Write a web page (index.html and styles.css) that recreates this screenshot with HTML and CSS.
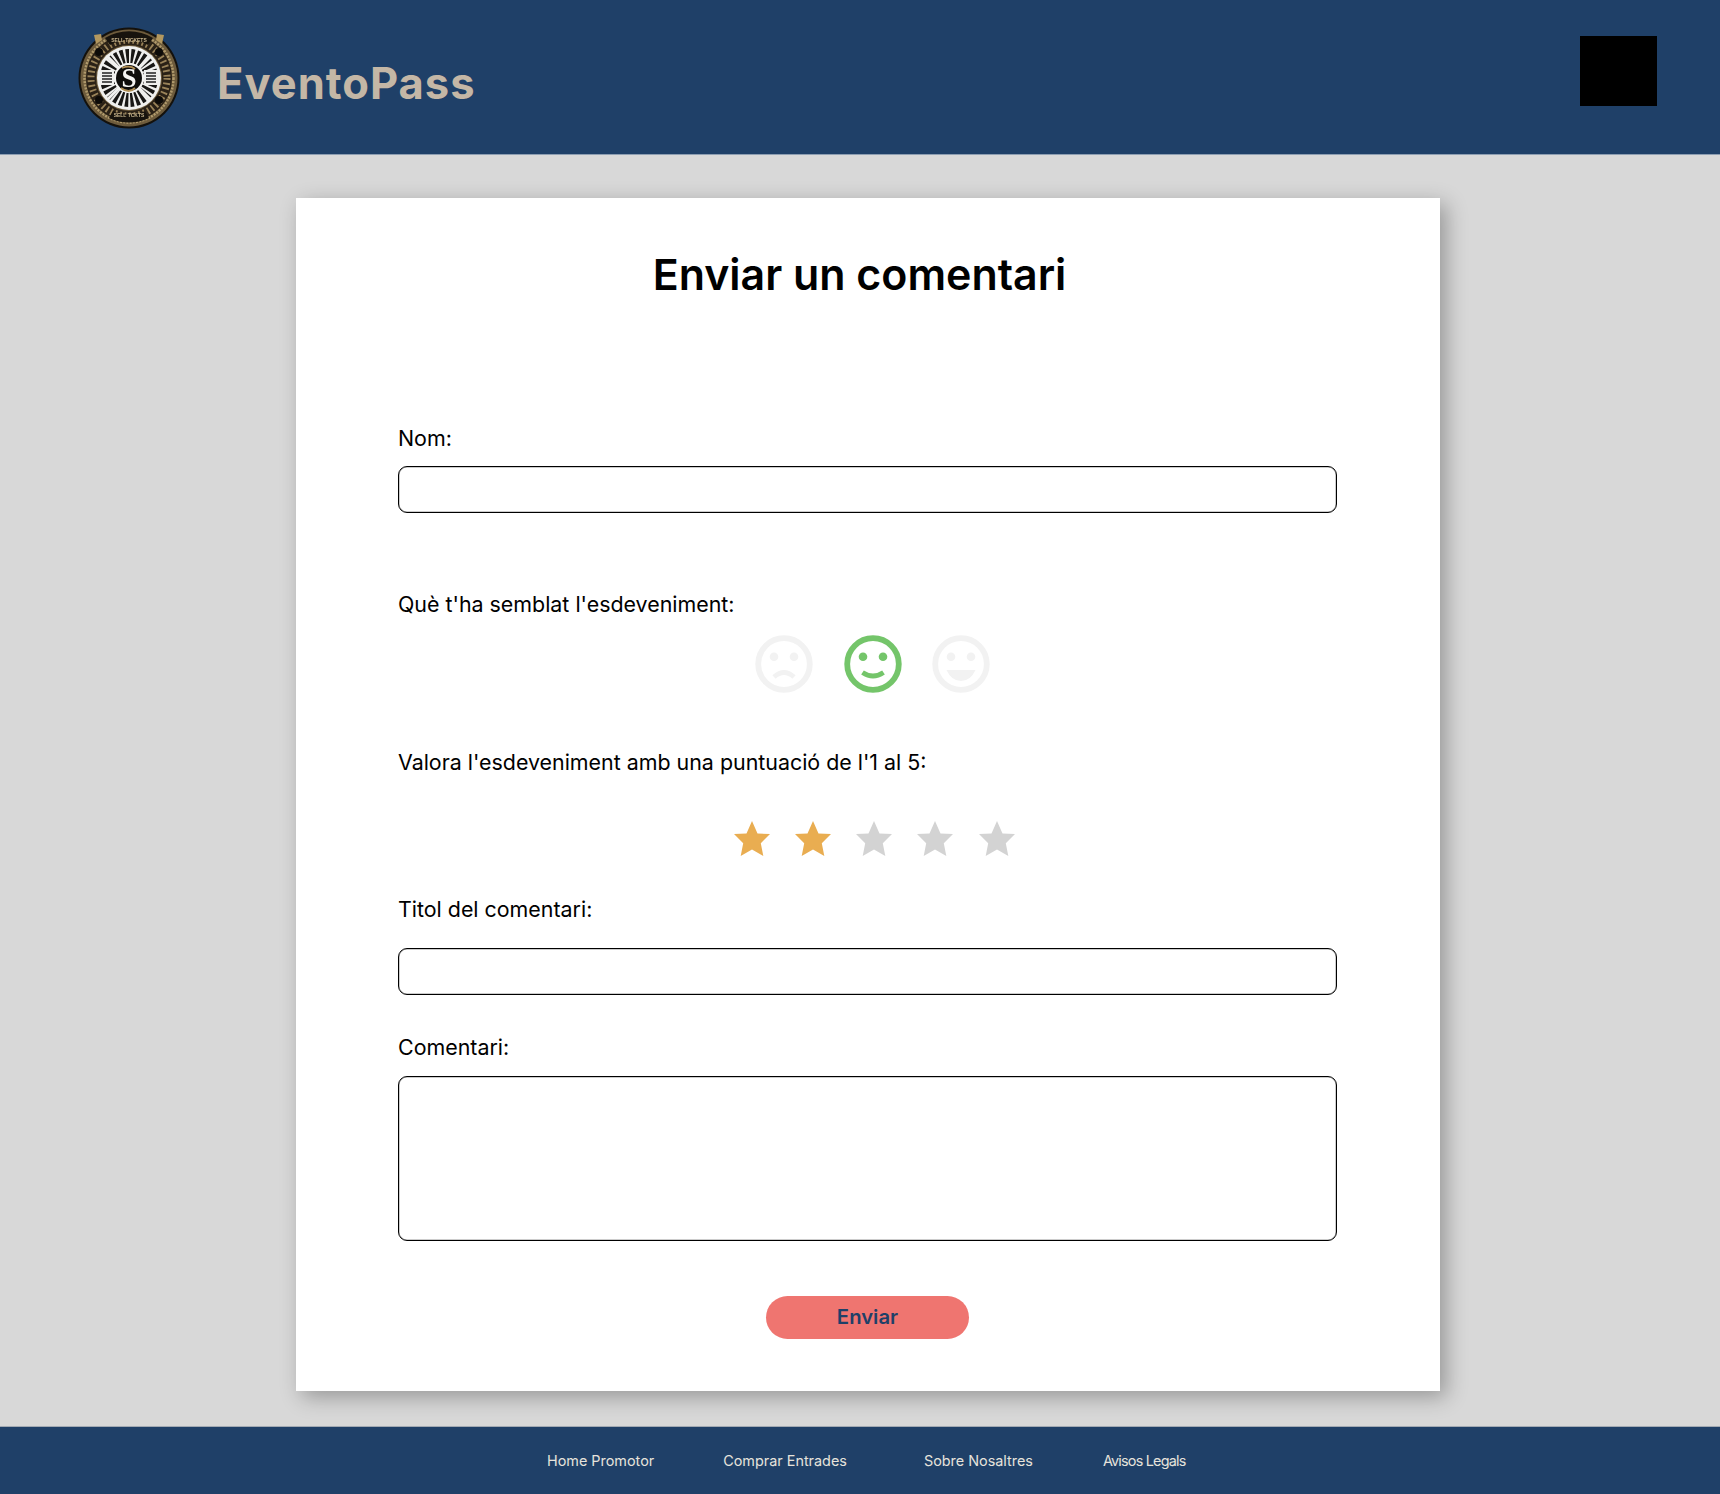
FILE: index.html
```html
<!DOCTYPE html>
<html lang="ca">
<head>
<meta charset="utf-8">
<title>EventoPass</title>
<link rel="stylesheet" href="styles.css">
</head>
<body>
<header class="topbar">
  <div class="brand">
    <svg class="logo" viewBox="0 0 102 102" aria-hidden="true">
      <circle cx="51" cy="51" r="50.500" fill="#14110c"/>
      <circle cx="51" cy="51" r="48.500" fill="#6d5b3c"/>
      <circle cx="51" cy="51" r="44.500" fill="none" stroke="#b09a6c" stroke-width="2.500" stroke-dasharray="2 1.200"/>
      <circle cx="51" cy="51" r="38" fill="none" stroke="#2a2116" stroke-width="10"/>
      <circle cx="51" cy="51" r="38" fill="none" stroke="#9a8359" stroke-width="7" stroke-dasharray="1.800 3"/>
      <path d="M16 8l7-1 1 6-6 4zM86 8l-7-1-1 6 6 4z" fill="#b3985f"/>
      <circle cx="21" cy="25" r="4" fill="#0d0b08"/>
      <circle cx="81" cy="25" r="4" fill="#0d0b08"/>
      <circle cx="21" cy="73" r="4" fill="#0d0b08"/>
      <circle cx="81" cy="73" r="4" fill="#0d0b08"/>
      <path d="M27 11a46 46 0 0 1 48 0l-5 7a37 37 0 0 0-38 0zM31 91a46 46 0 0 0 40 0l-4-7a37 37 0 0 1-32 0z" fill="#17130d"/>
      <text class="logo-text" x="51" y="14.500" text-anchor="middle">SELL TICKETS</text>
      <text class="logo-text" x="51" y="90" text-anchor="middle">SELL TCKTS</text>
      <circle cx="51" cy="51" r="32" fill="#f0f0ee"/>
      <circle cx="51" cy="51" r="22" fill="none" stroke="#181715" stroke-width="14" stroke-dasharray="3 2"/>
      <path d="M29 29l44 44M73 29L29 73" stroke="#f0f0ee" stroke-width="3"/>
      <circle cx="51" cy="51" r="15" fill="#f4f4f2"/>
      <circle cx="51" cy="51" r="13" fill="#0e0d0b"/>
      <rect x="22" y="43" width="14" height="15" fill="#efefed"/>
      <rect x="66" y="43" width="14" height="15" fill="#efefed"/>
      <path d="M24 46h10M24 49h10M24 52h10M24 55h10M68 46h10M68 49h10M68 52h10M68 55h10" stroke="#222" stroke-width="1.300"/>
      <text class="logo-s" x="51" y="60" text-anchor="middle">S</text>
      <path d="M43 61q8 6 14 0M44 41q8-3 13 1" fill="none" stroke="#b08f55" stroke-width="1.800"/>
    </svg>
    <span class="brand-name">EventoPass</span>
  </div>
  <div class="avatar"></div>
</header>

<main class="page">
  <section class="card">
    <h1 class="title">Enviar un comentari</h1>
    <form class="form">
      <label class="label label-nom" for="nom">Nom:</label>
      <input class="field field-nom" id="nom" type="text">

      <p class="label label-face">Què t'ha semblat l'esdeveniment:</p>
      <div class="faces">
        <svg class="face face-off" viewBox="0 0 58 58" aria-hidden="true">
          <circle cx="29" cy="29" r="25.800" class="ring"/>
          <circle cx="19" cy="21.700" r="4.300" class="fill"/>
          <circle cx="39" cy="21.700" r="4.300" class="fill"/>
          <path d="M19 42q10-9 20 0" class="mouth"/>
        </svg>
        <svg class="face face-on" viewBox="0 0 58 58" aria-hidden="true">
          <circle cx="29" cy="29" r="25.800" class="ring"/>
          <circle cx="19" cy="21.700" r="4.300" class="fill"/>
          <circle cx="39" cy="21.700" r="4.300" class="fill"/>
          <path d="M18.500 37.500q10.500 7 21 0" class="mouth"/>
        </svg>
        <svg class="face face-off" viewBox="0 0 58 58" aria-hidden="true">
          <circle cx="29" cy="29" r="25.800" class="ring"/>
          <circle cx="19" cy="21.700" r="4.300" class="fill"/>
          <circle cx="39" cy="21.700" r="4.300" class="fill"/>
          <path d="M14.500 35h29q-5 11-14.500 11t-14.500-11z" class="fill"/>
        </svg>
      </div>

      <p class="label label-rate">Valora l'esdeveniment amb una puntuació de l'1 al 5:</p>
      <div class="stars">
        <svg class="star star-on" viewBox="0 0 36 35" aria-hidden="true"><polygon points="18,0 23.500,12.600 36,13 26.800,22.300 29.300,35 18,28.500 6.700,35 9.200,22.300 0,13 12.500,12.600"/></svg>
        <svg class="star star-on" viewBox="0 0 36 35" aria-hidden="true"><polygon points="18,0 23.500,12.600 36,13 26.800,22.300 29.300,35 18,28.500 6.700,35 9.200,22.300 0,13 12.500,12.600"/></svg>
        <svg class="star" viewBox="0 0 36 35" aria-hidden="true"><polygon points="18,0 23.500,12.600 36,13 26.800,22.300 29.300,35 18,28.500 6.700,35 9.200,22.300 0,13 12.500,12.600"/></svg>
        <svg class="star" viewBox="0 0 36 35" aria-hidden="true"><polygon points="18,0 23.500,12.600 36,13 26.800,22.300 29.300,35 18,28.500 6.700,35 9.200,22.300 0,13 12.500,12.600"/></svg>
        <svg class="star" viewBox="0 0 36 35" aria-hidden="true"><polygon points="18,0 23.500,12.600 36,13 26.800,22.300 29.300,35 18,28.500 6.700,35 9.200,22.300 0,13 12.500,12.600"/></svg>
      </div>

      <label class="label label-title" for="titol">Titol del comentari:</label>
      <input class="field field-title" id="titol" type="text">

      <label class="label label-comment" for="comentari">Comentari:</label>
      <textarea class="field field-area" id="comentari"></textarea>

      <button class="submit" type="button">Enviar</button>
    </form>
  </section>
</main>

<footer class="footer">
  <a class="foot-link" href="#">Home Promotor</a>
  <a class="foot-link" href="#">Comprar Entrades</a>
  <a class="foot-link foot-wide" href="#">Sobre Nosaltres</a>
  <a class="foot-link foot-tight" href="#">Avisos Legals</a>
</footer>
</body>
</html>
```
FILE: styles.css
```css
* { box-sizing: border-box; }
html, body { margin: 0; padding: 0; }
body {
  background: #d8d8d8;
  font-family: Inter, "Liberation Sans", sans-serif;
  color: #000;
  width: 1720px;
}
.topbar {
  height: 155px;
  background: #1f4068;
  border-bottom: 1px solid #8d9eb2;
  display: flex;
  justify-content: space-between;
  align-items: flex-start;
  padding: 27px 63px 0 78px;
}
.brand { display: flex; align-items: center; gap: 37px; }
.logo { width: 102px; height: 102px; display: block; filter: blur(.4px); }
.logo-text { font: 700 5px "Liberation Sans", sans-serif; fill: #c9b68e; }
.logo-s { font: 700 27px "Liberation Serif", serif; fill: #f4f4f2; }
.brand-name {
  font-family: Inter, "Liberation Sans", sans-serif;
  font-weight: 700;
  font-size: 43.500px;
  letter-spacing: 1px;
  line-height: 52px;
  color: #c4b7a6;
  margin-top: 10px;
}
.avatar { width: 77px; height: 70px; background: #000; margin-top: 9px; }

.page { padding: 43px 280px 35px 296px; }
.card {
  width: 1144px;
  height: 1193px;
  background: #fff;
  box-shadow: 6px 6px 20px rgba(0, 0, 0, .3);
  padding: 51px 103px 52px 102px;
}
.title {
  margin: 0 16px 0 0;
  font-size: 42.900px;
  font-weight: 600;
  line-height: 50px;
  text-align: center;
}
.form { display: flex; flex-direction: column; margin-top: 126px; }
.label {
  display: block;
  margin: 0;
  font-size: 21.400px;
  line-height: 26px;
  color: #000;
}
.field {
  display: block;
  width: 939px;
  height: 47px;
  border: 1px solid #000;
  box-shadow: inset 0 0 0 .5px rgba(0, 0, 0, .4);
  border-radius: 9px;
  background: #fff;
  padding: 0;
  resize: none;
}
.field-nom { margin-top: 15px; }
.label-face { margin-top: 78px; }
.faces { display: flex; gap: 30.500px; margin: 18px 0 0 357px; }
.face { width: 58px; height: 58px; display: block; }
.ring { fill: none; stroke: currentColor; stroke-width: 5.800; }
.fill { fill: currentColor; }
.mouth { fill: none; stroke: currentColor; stroke-width: 4.800; }
.face-off { color: #f2f2f2; }
.face-on { color: #74c56a; }
.label-rate { margin-top: 56px; }
.stars { display: flex; gap: 25.250px; margin: 46px 0 0 335.500px; }
.star { width: 36px; height: 35px; display: block; fill: #d3d3d3; }
.star-on { fill: #e9ad51; }
.label-title { margin-top: 40px; }
.field-title { margin-top: 26px; }
.label-comment { margin-top: 39px; }
.field-area { margin-top: 16px; height: 165px; }
.submit {
  align-self: center;
  width: 203px;
  height: 43px;
  margin-top: 55px;
  border: 0;
  border-radius: 22px;
  background: #ef7570;
  color: #1f4068;
  font-family: Inter, "Liberation Sans", sans-serif;
  font-size: 20.300px;
  font-weight: 600;
  padding: 0 0 3px;
}
.footer {
  height: 68px;
  background: #1f4068;
  border-top: 1px solid #a3aab3;
  display: flex;
  align-items: center;
  padding-left: 547px;
  gap: 69px;
}
.foot-link {
  color: #e6e3dc;
  font-size: 14.400px;
  line-height: 18px;
  text-decoration: none;
}
.foot-wide { margin-left: 8px; }
.foot-tight { letter-spacing: -.8px; margin-left: 1px; }
```
